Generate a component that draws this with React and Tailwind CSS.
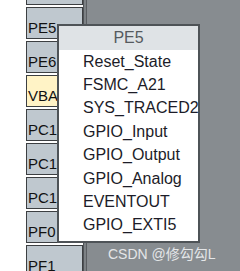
export default function App() {
  const pins = [
    { t: "", y: false },
    { t: "PE5", y: false },
    { t: "PE6", y: false },
    { t: "VBAT", y: true },
    { t: "PC1", y: false },
    { t: "PC1", y: false },
    { t: "PC1", y: false },
    { t: "PF0", y: false },
    { t: "PF1", y: false },
  ];
  const items = [
    "Reset_State",
    "FSMC_A21",
    "SYS_TRACED2",
    "GPIO_Input",
    "GPIO_Output",
    "GPIO_Analog",
    "EVENTOUT",
    "GPIO_EXTI5",
  ];
  return (
    <div
      className="relative w-[240px] h-[271px] overflow-hidden bg-white flex"
      style={{ fontFamily: '"Liberation Sans", Arial, sans-serif' }}
    >
      <div className="w-[26px] shrink-0 bg-white" />
      <div className="w-[57px] shrink-0 flex flex-col gap-[2px] mt-[-27px] bg-white">
        {pins.map((p, i) => (
          <div
            key={i}
            className={`h-[32px] shrink-0 border border-[#3c3f42] flex items-end pb-[3px] pl-[1px] text-[15px] leading-none text-[#111] overflow-hidden whitespace-nowrap ${
              p.y ? "bg-[#fff3c6]" : "bg-[#bfc8cf]"
            }`}
          >
            {p.t}
          </div>
        ))}
      </div>
      <div className="flex-1 bg-[#878c90] border-l border-[#4f5357] flex">
        <div className="w-[3px] bg-[#7c8185] border-r border-[#5a5e62]" />
        <div className="flex-1 flex items-end pb-[10px] pl-[21px]">
          <span
            className="text-[14px] leading-none text-[#e4e6e8]"
            style={{ fontFamily: '"Liberation Sans", "Noto Sans CJK SC", sans-serif' }}
          >
            CSDN @修勾勾L
          </span>
        </div>
      </div>

      <div className="absolute left-[57px] top-[24px] w-[143px] h-[219px] border-2 border-[#4e5357] bg-white flex flex-col">
        <div className="h-[24px] bg-[#dfe3e6] flex items-center justify-center text-[16px] text-[#555a5e] leading-none">
          PE5
        </div>
        <div className="flex flex-col">
          {items.map((it) => (
            <div
              key={it}
              className="h-[23.4px] flex items-center pl-[24px] text-[16px] leading-none text-[#1c1c28] whitespace-nowrap"
            >
              {it}
            </div>
          ))}
        </div>
      </div>
    </div>
  );
}
